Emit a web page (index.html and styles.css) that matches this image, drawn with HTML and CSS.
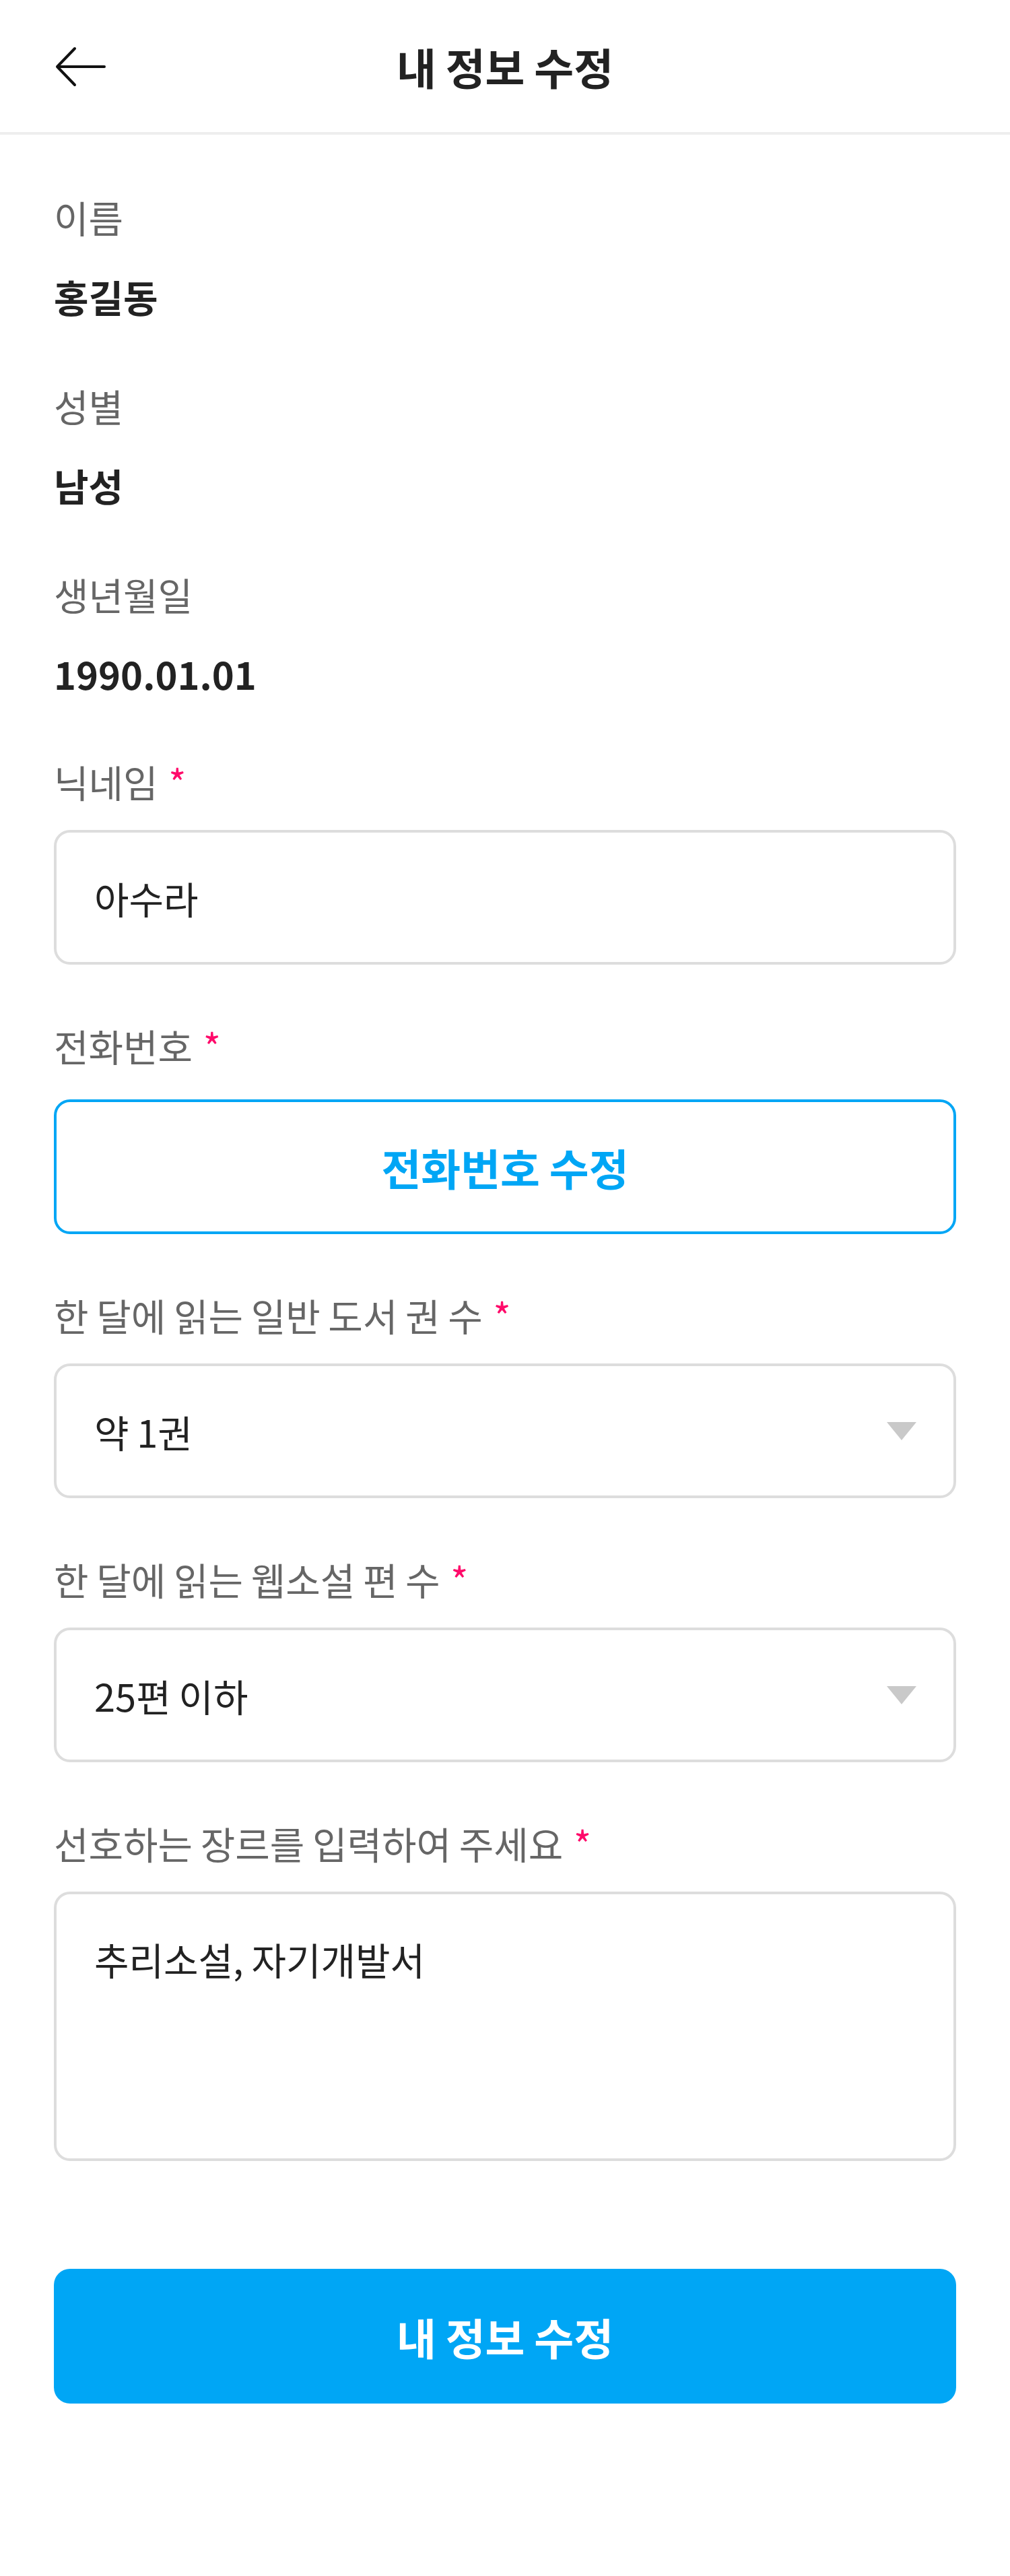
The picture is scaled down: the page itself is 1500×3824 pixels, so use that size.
FILE: index.html
```html
<!DOCTYPE html>
<html lang="ko">

<head>
  <meta charset="UTF-8" />
  <title>내 정보 수정</title>
  <link rel="stylesheet" href="styles.css">
</head>

<body>
  <!-- 상단 바 -->
  <header class="topbar">
    <button class="back-btn" type="button" aria-label="뒤로 가기">
      <svg width="80" height="60" viewBox="0 0 80 60">
        <path d="M5 30 H75 M31 3 L5 30 L31 57" fill="none" stroke="#111" stroke-width="4"
          stroke-linecap="round" stroke-linejoin="round" />
      </svg>
    </button>
    <h1 class="topbar-title">내 정보 수정</h1>
    <span></span>
  </header>

  <main class="content">
    <!-- 기본 정보 (수정 불가) -->
    <dl class="info">
      <div class="info-item">
        <dt>이름</dt>
        <dd>홍길동</dd>
      </div>
      <div class="info-item">
        <dt>성별</dt>
        <dd>남성</dd>
      </div>
      <div class="info-item">
        <dt>생년월일</dt>
        <dd>1990.01.01</dd>
      </div>
    </dl>

    <!-- 수정 가능한 항목 -->
    <form class="form">
      <div class="field">
        <label class="label" for="nickname">닉네임 <span class="req">*</span></label>
        <input id="nickname" class="input" type="text" value="아수라">
      </div>

      <div class="field">
        <span class="label">전화번호 <span class="req">*</span></span>
        <button class="btn btn-outline" type="button">전화번호 수정</button>
      </div>

      <div class="field">
        <span class="label">한 달에 읽는 일반 도서 권 수 <span class="req">*</span></span>
        <div class="select">
          <span>약 1권</span>
          <svg class="caret" width="44" height="27" viewBox="0 0 44 27">
            <polygon points="0,0 44,0 22,27" fill="#c9c9c9" />
          </svg>
        </div>
      </div>

      <div class="field">
        <span class="label">한 달에 읽는 웹소설 편 수 <span class="req">*</span></span>
        <div class="select">
          <span>25편 이하</span>
          <svg class="caret" width="44" height="27" viewBox="0 0 44 27">
            <polygon points="0,0 44,0 22,27" fill="#c9c9c9" />
          </svg>
        </div>
      </div>

      <div class="field">
        <label class="label" for="genre">선호하는 장르를 입력하여 주세요 <span class="req">*</span></label>
        <textarea id="genre" class="textarea">추리소설, 자기개발서</textarea>
      </div>

      <button class="btn btn-primary" type="submit">내 정보 수정</button>
    </form>
  </main>
</body>

</html>
```

FILE: styles.css
```css
/* --- 변수 --- */
:root {
  --blue: #00a6f5;
  --text: #222222;
  --label: #666666;
  --border: #dddddd;
  --line: #eeeeee;
  --required: #ff0a6a;
}

/* --- 기본 --- */
body {
  margin: 0;
  background: #ffffff;
  font-family: "Noto Sans CJK KR", "Noto Sans", sans-serif;
  color: var(--text);
  word-spacing: -4px;
}

/* --- 상단 바 --- */
.topbar {
  height: 196px;
  border-bottom: 4px solid var(--line);
  display: grid;
  grid-template-columns: 1fr auto 1fr;
  align-items: center;
  padding: 0 80px;
}

.back-btn {
  width: 80px;
  height: 60px;
  padding: 0;
  border: none;
  background: none;
  display: flex;
  margin-top: 2px;
}

.topbar-title {
  margin: 0;
  font-size: 64px;
  font-weight: 700;
  line-height: 72px;
  color: var(--text);
}

/* --- 본문 --- */
.content {
  padding: 86px 80px 256px;
}

.info {
  margin: 0;
}

.info-item + .info-item {
  margin-top: 90px;
}

.info dt {
  font-size: 56px;
  line-height: 72px;
  color: var(--label);
  margin-bottom: 46px;
}

.info dd {
  margin: 0;
  font-size: 56px;
  line-height: 72px;
  font-weight: 700;
}

/* --- 폼 --- */
.form {
  margin-top: 88px;
  display: flex;
  flex-direction: column;
}

.field + .field {
  margin-top: 84px;
}

.label {
  display: block;
  font-size: 56px;
  line-height: 72px;
  color: var(--label);
  margin-bottom: 36px;
}

.req {
  color: var(--required);
  margin-left: 4px;
}

.input,
.select,
.textarea {
  box-sizing: border-box;
  width: 100%;
  border: 4px solid var(--border);
  border-radius: 24px;
  background: #ffffff;
  font-family: inherit;
  font-size: 56px;
  color: var(--text);
  word-spacing: -4px;
}

.input {
  display: block;
  height: 200px;
  padding: 0 56px;
  outline: none;
}

.select {
  height: 200px;
  padding: 0 55px 0 56px;
  display: flex;
  align-items: center;
  justify-content: space-between;
}

.textarea {
  display: block;
  height: 400px;
  padding: 60px 56px 56px;
  line-height: 72px;
  resize: none;
  outline: none;
}

/* --- 버튼 --- */
.btn {
  box-sizing: border-box;
  width: 100%;
  height: 200px;
  border-radius: 24px;
  font-family: inherit;
  font-size: 64px;
  font-weight: 700;
  word-spacing: -4px;
  cursor: pointer;
}

.btn-outline {
  margin-top: 8px;
  background: #ffffff;
  border: 4px solid var(--blue);
  color: var(--blue);
}

.btn-primary {
  margin-top: 160px;
  background: var(--blue);
  border: none;
  color: #ffffff;
}
```
